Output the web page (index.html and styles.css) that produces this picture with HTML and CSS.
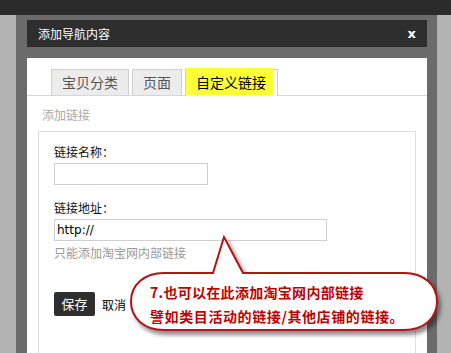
FILE: index.html
```html
<!DOCTYPE html>
<html lang="zh">
<head>
<meta charset="utf-8">
<title>添加导航内容</title>
<link rel="stylesheet" href="styles.css">
</head>
<body>
<div class="page">
  <div class="topbar"></div>
  <div class="frame">
    <div class="dialog-title">
      <span>添加导航内容</span>
      <span class="close">x</span>
    </div>
    <div class="dialog-body">
      <div class="tabs">
        <div class="tab">宝贝分类</div>
        <div class="tab">页面</div>
        <div class="tab active"><span class="hl">自定义链接</span></div>
      </div>
      <div class="section">
        <div class="section-title">添加链接</div>
        <div class="box">
          <div class="label">链接名称：</div>
          <div class="input short"></div>
          <div class="label second">链接地址：</div>
          <div class="input long">http://</div>
          <div class="hint">只能添加淘宝网内部链接</div>
          <div class="actions">
            <span class="btn">保存</span>
            <span class="cancel">取消</span>
          </div>
        </div>
      </div>
    </div>
  </div>
  <div class="callout">
    <svg width="320" height="108" viewBox="0 0 320 108">
      <defs>
        <filter id="sh" x="-10%" y="-10%" width="130%" height="140%">
          <feDropShadow dx="3" dy="4" stdDeviation="2" flood-color="#000" flood-opacity="0.45"/>
        </filter>
      </defs>
      <path d="M 36,40 L 85,40 L 96,4 L 115,40 L 276,40 C 296,40 309,52 309,68.5 C 309,85 296,97 276,97 L 36,97 C 16,97 3,85 3,68.5 C 3,52 16,40 36,40 Z" fill="#ffffff" stroke="#b01218" stroke-width="2" filter="url(#sh)"/>
    </svg>
    <div class="callout-text">
      <div>7.也可以在此添加淘宝网内部链接</div>
      <div class="wide">譬如类目活动的链接/其他店铺的链接。</div>
    </div>
  </div>
</div>
</body>
</html>
```
FILE: styles.css
```css
html, body {
  margin: 0;
  padding: 0;
}
body {
  background: #b3b3b3;
  font-family: "Noto Sans CJK SC", "DejaVu Sans", sans-serif;
}
.page {
  position: relative;
  width: 451px;
  height: 353px;
  overflow: hidden;
  background: #b3b3b3;
}
.topbar {
  height: 15px;
  background: #2b2b2b;
}
.frame {
  margin-left: 16px;
  width: 421px;
  height: 338px;
  box-sizing: border-box;
  padding: 5px 10px 0 11px;
  background: #6b6b6b;
  display: flex;
  flex-direction: column;
  overflow: hidden;
}
.dialog-title {
  flex-shrink: 0;
  height: 27px;
  background: #2e2e2e;
  color: #fff;
  font-size: 12px;
  display: flex;
  align-items: center;
  justify-content: space-between;
  padding: 0 11px 0 11px;
}
.close {
  font-family: "DejaVu Sans", sans-serif;
  font-weight: bold;
  font-size: 13px;
  line-height: 13px;
}
.dialog-body {
  flex-shrink: 0;
  margin-top: 11px;
  height: 300px;
  background: #fff;
}
.tabs {
  display: flex;
  align-items: flex-end;
  padding: 11px 0 0 24px;
  height: 26px;
  border-bottom: 1px solid #d6d6d6;
}
.tab {
  height: 25px;
  line-height: 25px;
  padding: 0 10px;
  border: 1px solid #d0d0d0;
  border-bottom: none;
  background: #ececec;
  color: #555;
  font-size: 14px;
  margin-right: 3px;
}
.tab.active {
  background: #fff;
  color: #000;
  padding: 0 4px 0 0;
  margin-bottom: -1px;
  height: 26px;
  position: relative;
}
.hl {
  display: block;
  background: #ffff38;
  padding: 0 7px 0 10px;
  height: 27px;
  margin-top: -2px;
  line-height: 28px;
}
.section {
  padding: 0 11px;
}
.section-title {
  color: #aaa;
  font-size: 12px;
  line-height: 18px;
  padding: 10px 0 0 4px;
  height: 25px;
}
.box {
  border: 1px solid #dedede;
  border-bottom: none;
  height: 240px;
  padding: 10px 15px 0 15px;
}
.label {
  font-size: 12px;
  line-height: 20px;
  color: #111;
}
.label.second {
  margin-top: 13px;
}
.input {
  margin-top: 1px;
  height: 20px;
  border: 1px solid #cfcfcf;
  box-sizing: content-box;
  font-family: "DejaVu Sans", sans-serif;
  font-size: 12px;
  line-height: 20px;
  padding: 0 2px;
  color: #000;
}
.input.short {
  width: 148px;
}
.input.long {
  width: 267px;
}
.hint {
  margin-top: 3px;
  font-size: 12px;
  line-height: 18px;
  color: #999;
}
.actions {
  margin-top: 30px;
  display: flex;
  align-items: center;
}
.btn {
  width: 41px;
  height: 24px;
  line-height: 24px;
  text-align: center;
  background: #2e2e2e;
  color: #fff;
  border-radius: 2px;
  font-size: 13px;
}
.cancel {
  margin-left: 7px;
  font-size: 12px;
  color: #000;
}
.callout {
  position: absolute;
  left: 128px;
  top: 233px;
  width: 320px;
  height: 108px;
}
.callout svg {
  display: block;
}
.callout-text {
  position: absolute;
  left: 22px;
  top: 47px;
  color: #c00000;
  font-weight: bold;
  font-size: 14px;
  line-height: 24px;
  white-space: nowrap;
  letter-spacing: 0.3px;
}
.callout-text .wide {
  letter-spacing: 0.6px;
}
```
